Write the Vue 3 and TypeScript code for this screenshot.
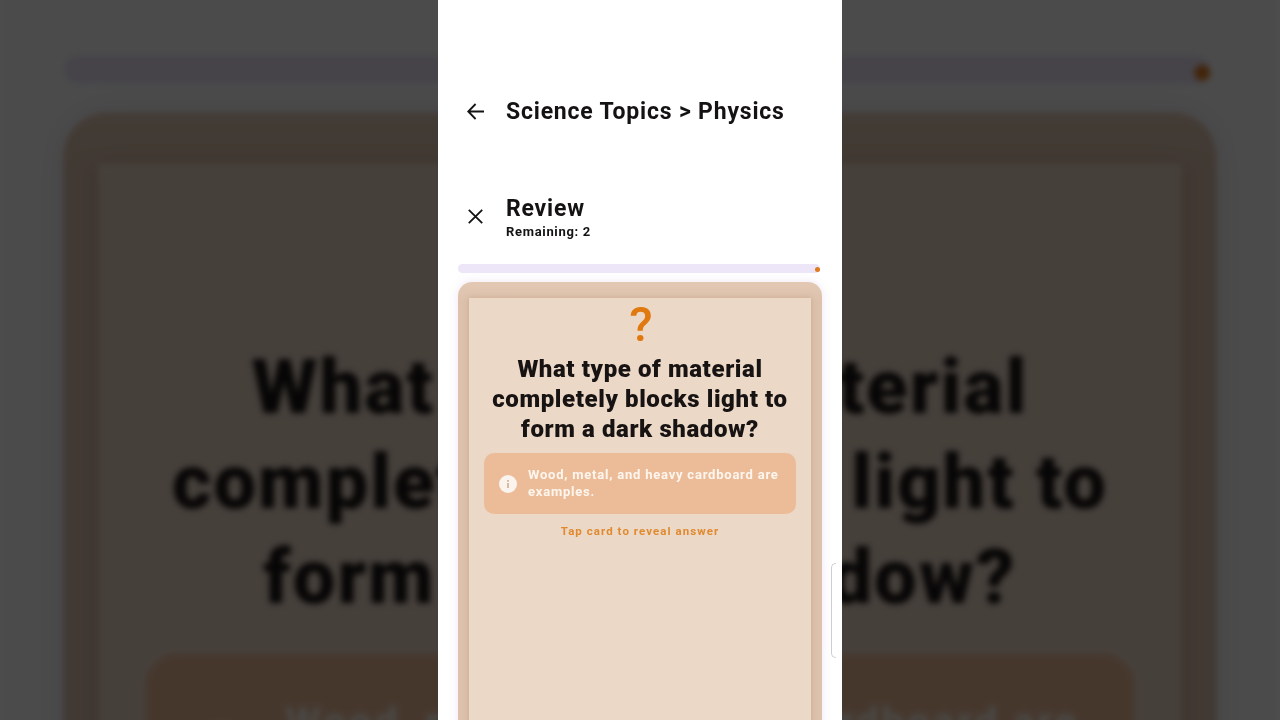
<script setup lang="ts">
const layers: string[] = ['backdrop', 'front']
const questionLines: string[] = ['What type of material', 'completely blocks light to', 'form a dark shadow?']
</script>

<template>
  <main class="stage">
    <section v-for="layer in layers" :key="layer" class="phone" :class="layer" :aria-hidden="layer === 'backdrop'">
      <header class="top-bar">
        <svg class="back" viewBox="0 0 17 17" width="17" height="17" fill="none" stroke="currentColor" stroke-width="1.8">
          <path d="M17 8.5H1.2M8.6 1 1.2 8.5 8.6 16" />
        </svg>
        <h1 class="crumbs">Science Topics &gt; Physics</h1>
      </header>

      <div class="review-bar">
        <svg class="close" viewBox="0 0 15 15" width="15" height="15" fill="none" stroke="currentColor" stroke-width="1.8">
          <path d="M.8.8l13.4 13.4M14.2.8.8 14.2" />
        </svg>
        <div class="review-text">
          <h2 class="review-title">Review</h2>
          <p class="remaining">Remaining: 2</p>
        </div>
      </div>

      <div class="progress"><span class="progress-dot"></span></div>

      <article class="card">
        <div class="card-face">
          <div class="mark">?</div>
          <h3 class="question">
            <span v-for="line in questionLines" :key="line" class="question-line">{{ line }}</span>
          </h3>
          <div class="hint">
            <span class="hint-icon">
              <svg viewBox="0 0 18 18" width="18" height="18">
                <circle cx="9" cy="9" r="9" fill="#fbf4ee" />
                <rect x="8.1" y="8" width="1.8" height="5" fill="#d9b497" />
                <rect x="8.1" y="5" width="1.8" height="1.8" fill="#d9b497" />
              </svg>
            </span>
            <p class="hint-text">Wood, metal, and heavy cardboard are examples.</p>
          </div>
          <p class="tap">Tap card to reveal answer</p>
        </div>
      </article>

      <span class="side-handle"></span>
    </section>
  </main>
</template>

<style>
html,
body {
  margin: 0;
  background: #4f4f4f;
  overflow: hidden;
}
</style>

<style scoped>
.stage {
  position: relative;
  display: flex;
  justify-content: center;
  width: 1280px;
  height: 720px;
  overflow: hidden;
  background: #4f4f4f;
}

.phone {
  box-sizing: border-box;
  flex: none;
  width: 404px;
  height: 720px;
  overflow: hidden;
  background: #fff;
  color: #141212;
  font-family: Roboto, "Liberation Sans", sans-serif;
  position: relative;
}

.front {
  filter: blur(.2px);
}

.backdrop {
  position: absolute;
  left: -.4px;
  top: -781px;
  height: 1000px;
  transform: scale(3.168);
  transform-origin: 0 0;
  filter: blur(1px) brightness(.295);
}

.top-bar {
  display: flex;
  align-items: center;
  height: 48px;
  padding: 87px 0 0 29px;
}

.back {
  flex: none;
  margin-right: 22px;
}

.crumbs {
  margin: 2px 0 0;
  font-size: 23px;
  line-height: 48px;
  font-weight: 700;
  letter-spacing: .8px;
  white-space: nowrap;
}

.review-bar {
  display: flex;
  align-items: center;
  height: 48px;
  margin-top: 58px;
  padding-left: 30px;
}

.close {
  flex: none;
  margin: 0 23px 2px 0;
}

.review-title {
  margin: 0;
  font-size: 23px;
  line-height: 30px;
  font-weight: 700;
  letter-spacing: .8px;
}

.remaining {
  margin: 0;
  font-size: 13px;
  line-height: 16px;
  font-weight: 700;
  letter-spacing: .68px;
}

.progress {
  position: relative;
  width: 362px;
  height: 9px;
  margin: 23px 0 0 20px;
  border-radius: 5px;
  background: #ece6f8;
}

.progress-dot {
  position: absolute;
  right: 0;
  top: 2.5px;
  width: 5px;
  height: 5px;
  border-radius: 50%;
  background: #e07a20;
}

.card {
  box-sizing: border-box;
  width: 364px;
  height: 640px;
  margin: 9px 0 0 20px;
  padding: 16px 11px 0;
  border-radius: 14px;
  background: linear-gradient(#e3c9b3, #dcc1ac 20px);
  box-shadow: 0 0 10px rgba(190, 160, 215, .25);
}

.card-face {
  display: flex;
  flex-direction: column;
  align-items: center;
  height: 100%;
  background: #ecd8c7;
  box-shadow: 0 0 5px rgba(170, 125, 95, .35);
}

.mark {
  height: 30px;
  margin-top: 3px;
  padding-left: 2px;
  font-size: 48px;
  line-height: 48px;
  font-weight: 500;
  color: #e07a10;
}

.question {
  display: flex;
  flex-direction: column;
  align-items: center;
  margin: 23px 0 0;
  font-size: 24px;
  line-height: 30px;
  font-weight: 900;
  letter-spacing: .6px;
  color: #171313;
  white-space: nowrap;
}

.hint {
  box-sizing: border-box;
  display: flex;
  align-items: center;
  gap: 11px;
  width: 312px;
  height: 61px;
  margin-top: 9px;
  padding: 0 14px 0 15px;
  border-radius: 10px;
  background: #ecbc98;
}

.hint-icon {
  display: flex;
  flex: none;
}

.hint-text {
  margin: 0 0 2px;
  font-size: 13px;
  line-height: 17px;
  font-weight: 700;
  letter-spacing: .78px;
  color: #fdf6ef;
}

.tap {
  margin: 9px 0 0;
  font-size: 11.5px;
  line-height: 16px;
  font-weight: 700;
  letter-spacing: 1.05px;
  color: #e08a30;
}

.side-handle {
  position: absolute;
  left: 393px;
  top: 563px;
  width: 4px;
  height: 93px;
  border: 1px solid #cfcdd2;
  border-right: 0;
  border-radius: 5px 0 0 5px;
}
</style>
